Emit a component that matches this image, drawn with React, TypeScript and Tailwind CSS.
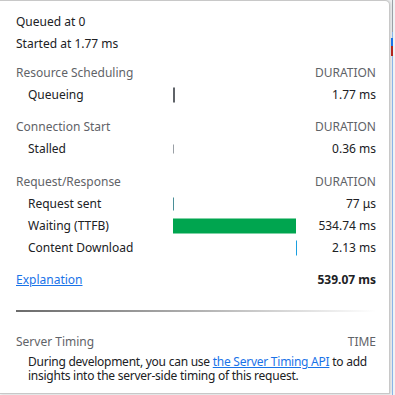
import React from "react";

type Row = {
  label: string;
  value: string;
  bar?: { left: number; width: number; height: number; color: string };
};

type Section = {
  title: string;
  gap: string;
  rows: Row[];
};

const sections: Section[] = [
  {
    title: "Resource Scheduling",
    gap: "mt-[7px]",
    rows: [{ label: "Queueing", value: "1.77 ms", bar: { left: 0, width: 2, height: 15, color: "#5f6368" } }],
  },
  {
    title: "Connection Start",
    gap: "mt-[10px]",
    rows: [{ label: "Stalled", value: "0.36 ms", bar: { left: 0, width: 1, height: 9, color: "#9aa0a6" } }],
  },
  {
    title: "Request/Response",
    gap: "mt-[11px]",
    rows: [
      { label: "Request sent", value: "77 μs", bar: { left: 0, width: 1, height: 13, color: "#4a8f98" } },
      { label: "Waiting (TTFB)", value: "534.74 ms", bar: { left: 0, width: 123, height: 15, color: "#00a54f" } },
      { label: "Content Download", value: "2.13 ms", bar: { left: 123, width: 1, height: 15, color: "#1a9fe0" } },
    ],
  },
];

const TimingRow: React.FC<{ row: Row }> = ({ row }) => (
  <div className="grid grid-cols-[145px_124px_1fr] h-[22px] items-center pl-[12px]">
    <span className="text-[#202124]">{row.label}</span>
    <div className="relative h-full">
      {row.bar && (
        <div
          className="absolute top-1/2 -translate-y-1/2"
          style={{ left: row.bar.left, width: row.bar.width, height: row.bar.height, background: row.bar.color }}
        />
      )}
    </div>
    <span className="text-right text-[#202124]">{row.value}</span>
  </div>
);

export default function App() {
  return (
    <div
      className="flex h-[395px] w-[395px] overflow-hidden bg-[#f1f3f4] text-[12px]"
      style={{ fontFamily: '"Noto Sans", "DejaVu Sans", sans-serif' }}
    >
      <div className="w-[390px] shrink-0 h-[394px] bg-white border-t border-b border-r border-[#c8c8c8] rounded-tr-[5px] shadow-[1px_0_3px_rgba(0,0,0,0.15)] pl-[16px] pr-[13px]">
        <div className="pt-[10px]">
          <div className="h-[22px] flex items-center text-[#202124]">Queued at 0</div>
          <div className="h-[22px] flex items-center text-[#202124]">Started at 1.77 ms</div>
        </div>

        {sections.map((s) => (
          <div key={s.title} className={s.gap}>
            <div className="h-[22px] flex items-center justify-between text-[#5f6368]">
              <span>{s.title}</span>
              <span>DURATION</span>
            </div>
            {s.rows.map((r) => (
              <TimingRow key={r.label} row={r} />
            ))}
          </div>
        ))}

        <div className="mt-[10px] h-[22px] flex items-center justify-between">
          <a href="#" className="text-[#1a73e8] underline">Explanation</a>
          <span className="font-bold text-[#202124]">539.07 ms</span>
        </div>

        <div className="mt-[19px] h-[2px] bg-gradient-to-r from-[#6b6b6b] via-[#b0b0b0] to-transparent" />

        <div className="mt-[19px] h-[22px] flex items-center justify-between text-[#5f6368]">
          <span>Server Timing</span>
          <span>TIME</span>
        </div>
        <p className="pl-[12px] pr-[4px] leading-[14px] mt-[2px] tracking-[-0.25px] text-[#202124]">
          During development, you can use{" "}
          <a href="#" className="text-[#1a73e8] underline">the Server Timing API</a> to add insights into the
          server-side timing of this request.
        </p>
      </div>
      <div className="flex-1 relative">
        <div className="absolute left-[2px] top-0 h-[32px] w-[1px] bg-[#9aa0a6]" />
        <div className="absolute left-[2px] top-[32px] bottom-0 w-[1px] bg-[#8ab4e8]" />
        <div className="absolute left-[1px] top-[38px] h-[8px] w-[2px] bg-[#1a73e8]" />
        <div className="absolute left-[1px] top-[46px] h-[10px] w-[2px] bg-[#b3261e]" />
      </div>
    </div>
  );
}
